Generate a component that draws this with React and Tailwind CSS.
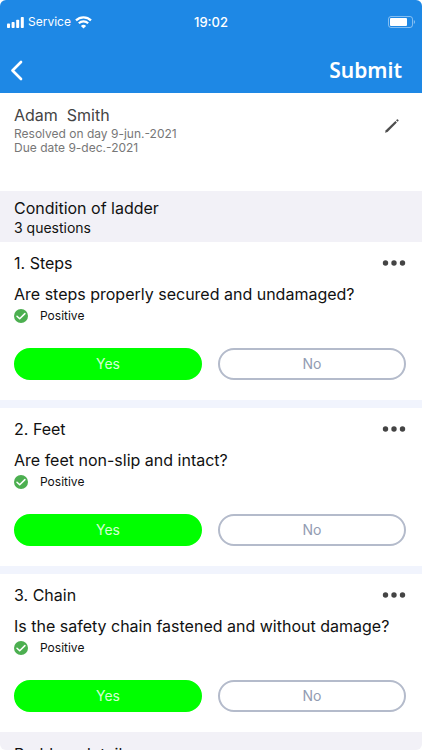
import { useState } from "react";

const questions = [
  { id: 1, title: "Steps", text: "Are steps properly secured and undamaged?" },
  { id: 2, title: "Feet", text: "Are feet non-slip and intact?" },
  {
    id: 3,
    title: "Chain",
    text: "Is the safety chain fastened and without damage?",
  },
];

function SignalIcon() {
  return (
    <svg width="17" height="11" viewBox="0 0 17 11" fill="white" aria-hidden="true">
      <rect x="0" y="6.5" width="3" height="4.5" rx="0.8" />
      <rect x="4.6" y="5" width="3" height="6" rx="0.8" />
      <rect x="9.2" y="2.7" width="3" height="8.3" rx="0.8" />
      <rect x="13.8" y="0" width="3" height="11" rx="0.8" />
    </svg>
  );
}

function WifiIcon() {
  return (
    <svg width="17" height="13" viewBox="0 0 17 13" fill="none" aria-hidden="true">
      <path d="M1 4.4a10.6 10.6 0 0 1 15 0" stroke="white" strokeWidth="2.2" />
      <path d="M3.8 7.3a6.7 6.7 0 0 1 9.4 0" stroke="white" strokeWidth="2.1" />
      <path d="M8.5 12.6 5.9 10a3.7 3.7 0 0 1 5.2 0Z" fill="white" />
    </svg>
  );
}

function BatteryIcon() {
  return (
    <svg width="27" height="12" viewBox="0 0 27 12" fill="none" aria-hidden="true">
      <rect
        x="0.5"
        y="0.5"
        width="24"
        height="11"
        rx="2.5"
        stroke="white"
        strokeOpacity="0.45"
      />
      <rect x="2" y="2" width="17" height="8" rx="1" fill="white" />
      <path d="M25.8 4v4c.8-.4 1.2-1.1 1.2-2s-.4-1.6-1.2-2Z" fill="white" fillOpacity="0.5" />
    </svg>
  );
}

function StatusBar() {
  return (
    <div className="grid grid-cols-3 items-center px-[7px] pt-3 leading-5">
      <div className="flex items-center gap-1">
        <SignalIcon />
        <span className="text-xs leading-5">Service</span>
        <WifiIcon />
      </div>
      <span className="text-center text-[13px] font-medium">19:02</span>
      <div className="flex justify-end">
        <BatteryIcon />
      </div>
    </div>
  );
}

function CheckIcon() {
  return (
    <svg width="14" height="14" viewBox="0 0 14 14" fill="none" aria-hidden="true">
      <circle cx="7" cy="7" r="7" fill="#4caf50" />
      <path
        d="m3 7.2 2.7 2.6 5.2-5.2"
        stroke="white"
        strokeWidth="1.5"
        strokeLinecap="round"
        strokeLinejoin="round"
      />
    </svg>
  );
}

function AnswerButton({ label, selected, onClick }) {
  return (
    <button
      type="button"
      aria-pressed={selected}
      onClick={onClick}
      className={`h-8 flex-1 rounded-full border-2 text-sm leading-5 ${
        selected
          ? "border-[#00ff00] bg-[#00ff00] text-[#d5ffd5]"
          : "border-[#b4bbcb] bg-white text-[#929cb2]"
      }`}
    >
      {label}
    </button>
  );
}

function QuestionCard({ question }) {
  const [answer, setAnswer] = useState("Yes");

  return (
    <article className="bg-white pt-[9px] pr-4 pb-5 pl-3.5">
      <div className="flex items-center justify-between">
        <h3 className="text-base leading-6">
          {question.id}. {question.title}
        </h3>
        <button type="button" aria-label="More options" className="text-[#444]">
          <svg width="24" height="6" viewBox="0 0 24 6" fill="currentColor">
            <circle cx="3.5" cy="3" r="2.7" />
            <circle cx="12" cy="3" r="2.7" />
            <circle cx="20.5" cy="3" r="2.7" />
          </svg>
        </button>
      </div>

      <p className="mt-[9px] text-base leading-5">{question.text}</p>

      <div className="flex items-center gap-3 text-xs leading-6">
        <CheckIcon />
        <span>Positive</span>
      </div>

      <div className="mt-5 flex gap-4">
        <AnswerButton
          label="Yes"
          selected={answer === "Yes"}
          onClick={() => setAnswer("Yes")}
        />
        <AnswerButton
          label="No"
          selected={answer === "No"}
          onClick={() => setAnswer("No")}
        />
      </div>
    </article>
  );
}

export default function App() {
  return (
    <div className="flex h-screen flex-col overflow-hidden rounded-md bg-white font-['Inter','Liberation_Sans',sans-serif] text-[#111]">
      <header className="shrink-0 bg-[#1e88e5] text-white">
        <StatusBar />
        <nav className="flex items-center justify-between px-2 pt-[22px] pb-[7px]">
          <button type="button" aria-label="Back">
            <svg width="18" height="22" viewBox="0 0 18 22" fill="none">
              <path
                d="M13 3 4.5 11.5 13 20"
                stroke="white"
                strokeWidth="2.7"
                strokeLinecap="round"
                strokeLinejoin="round"
              />
            </svg>
          </button>
          <button
            type="button"
            className="px-3 font-['Noto_Sans',sans-serif] text-[21px] leading-8 font-semibold"
          >
            Submit
          </button>
        </nav>
      </header>

      <main className="flex-1 overflow-y-auto [scrollbar-width:none]">
        <section className="flex items-start justify-between px-3.5 pt-2.5 pb-9">
          <div>
            <h1 className="text-base leading-6 whitespace-pre text-[#444]">
              {"Adam  Smith"}
            </h1>
            <p className="text-xs leading-3.5 text-[#777]">Resolved on day 9-jun.-2021</p>
            <p className="text-xs leading-3.5 text-[#777]">Due date 9-dec.-2021</p>
          </div>
          <button type="button" aria-label="Edit" className="mt-[15px] mr-2">
            <svg width="16" height="16" viewBox="0 0 16 16" fill="#4d4d4d">
              <path d="m1 14.7.8-2.5L11.4 2.9l1.5 1.5L3.5 13.9Z" />
              <path d="m12 2.2.9-.8q.5-.4 1 0l.5.5q.5.5 0 1l-.8.9Z" />
            </svg>
          </button>
        </section>

        <section>
          <div className="bg-[#f2f1f7] px-3.5 pt-[5px] pb-1.5">
            <h2 className="text-base leading-6">Condition of ladder</h2>
            <p className="text-sm leading-4">3 questions</p>
          </div>
          <div className="flex flex-col gap-2 bg-[#f1f4fd]">
            {questions.map((question) => (
              <QuestionCard key={question.id} question={question} />
            ))}
          </div>
        </section>

        <section className="bg-[#f2f1f7] px-3.5 py-2.5">
          <h2 className="text-base leading-6">Problem details</h2>
        </section>
      </main>
    </div>
  );
}
